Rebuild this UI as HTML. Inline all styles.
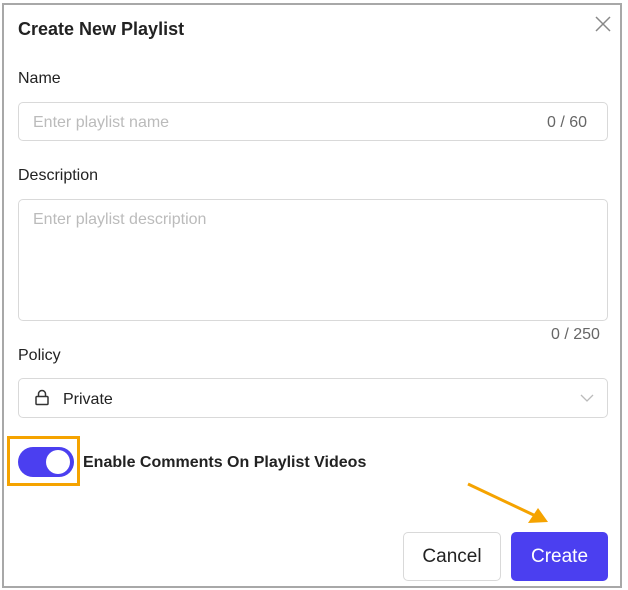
<!DOCTYPE html>
<html><head><style>
*{box-sizing:border-box;margin:0;padding:0}
body{width:628px;height:590px;background:#fff;font-family:"Liberation Sans",sans-serif;position:relative;overflow:hidden;color:#222}
.frame{position:absolute;left:2px;top:3px;width:620px;height:585px;border:2px solid #a8a8a8}
.a{position:absolute}
.lbl{font-size:16px;color:#222}
.box{border:1px solid #d9d9d9;border-radius:5px;background:#fff}
.ph{color:#bbb;font-size:16px}
</style></head><body>
<div class="frame"></div>
<div class="a" style="left:18px;top:19px;font-size:18px;font-weight:bold;color:#222">Create New Playlist</div>
<svg class="a" style="left:595px;top:16px" width="16" height="16"><path d="M1 1L15 15M15 1L1 15" stroke="#888" stroke-width="1.5"/></svg>
<div class="a lbl" style="left:18px;top:70px">Name</div>
<div class="a box" style="left:18px;top:102px;width:590px;height:39px"></div>
<div class="a ph" style="left:33px;top:114px">Enter playlist name</div>
<div class="a" style="left:547px;top:114px;font-size:16px;color:#666">0 / 60</div>
<div class="a lbl" style="left:18px;top:167px">Description</div>
<div class="a box" style="left:18px;top:199px;width:590px;height:122px"></div>
<div class="a ph" style="left:33px;top:211px">Enter playlist description</div>
<div class="a" style="left:551px;top:326px;font-size:16px;color:#666">0 / 250</div>
<div class="a lbl" style="left:18px;top:347px">Policy</div>
<div class="a box" style="left:18px;top:378px;width:590px;height:40px"></div>
<svg class="a" style="left:34px;top:389px" width="16" height="18"><rect x="2" y="7.5" width="12" height="8" rx="1" fill="none" stroke="#333" stroke-width="1.5"/><path d="M4.5 7.5V5a3.5 3.5 0 0 1 7 0v2.5" fill="none" stroke="#333" stroke-width="1.5"/></svg>
<div class="a" style="left:63px;top:391px;font-size:16px;color:#222">Private</div>
<svg class="a" style="left:580px;top:393px" width="14" height="10"><path d="M1 2L7 8L13 2" fill="none" stroke="#bbb" stroke-width="1.3"/></svg>
<div class="a" style="left:7px;top:436px;width:73px;height:50px;border:3px solid #f5a300"></div>
<div class="a" style="left:18px;top:447px;width:56px;height:30px;border-radius:15px;background:#4b3ff0"></div>
<div class="a" style="left:46px;top:450px;width:24px;height:24px;border-radius:50%;background:#fff"></div>
<div class="a" style="left:83px;top:454px;font-size:16px;font-weight:bold;color:#222">Enable Comments On Playlist Videos</div>
<svg class="a" style="left:460px;top:478px" width="100" height="50"><path d="M8 6L80 40" stroke="#f5a300" stroke-width="3"/><path d="M88 44L68 45L78 30Z" fill="#f5a300"/></svg>
<div class="a" style="left:403px;top:532px;width:98px;height:49px;border:1px solid #d9d9d9;border-radius:5px;text-align:center;line-height:47px;font-size:19px;color:#222">Cancel</div>
<div class="a" style="left:511px;top:532px;width:97px;height:49px;background:#4b3ff0;border-radius:5px;text-align:center;line-height:49px;font-size:19px;color:#fff">Create</div>
</body></html>
